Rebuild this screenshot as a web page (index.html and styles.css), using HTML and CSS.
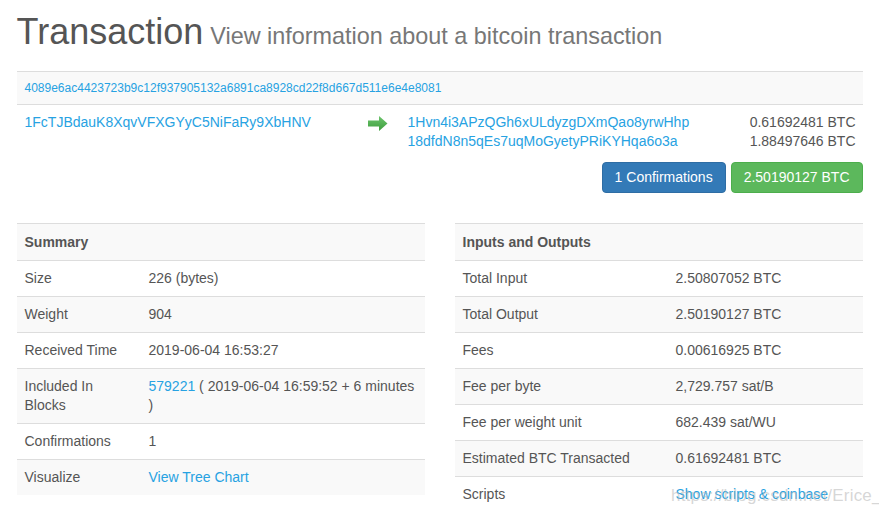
FILE: index.html
```html
<!DOCTYPE html>
<html lang="en">

<head>
    <meta charset="UTF-8">
    <title>Transaction</title>
    <link rel="stylesheet" href="styles.css">
</head>

<body>
    <div class="container">
        <h1>Transaction <small>View information about a bitcoin transaction</small></h1>

        <!-- tx hash + in/out -->
        <div class="tx">
            <div class="tx-hash"><a href="#">4089e6ac4423723b9c12f937905132a6891ca8928cd22f8d667d511e6e4e8081</a></div>
            <div class="tx-body">
                <div class="tx-in"><a href="#">1FcTJBdauK8XqvVFXGYyC5NiFaRy9XbHNV</a></div>
                <div class="tx-arrow">
                    <svg width="20" height="15" viewBox="0 0 20 15">
                        <defs>
                            <linearGradient id="ag" x1="0" y1="0" x2="0" y2="1">
                                <stop offset="0" stop-color="#6cc46c" />
                                <stop offset="1" stop-color="#3e9e3e" />
                            </linearGradient>
                        </defs>
                        <path d="M0 4.5 H11 V0 L19.5 7.5 L11 15 V10.5 H0 Z" fill="url(#ag)" />
                    </svg>
                </div>
                <div class="tx-out">
                    <div class="out-row"><a href="#">1Hvn4i3APzQGh6xULdyzgDXmQao8yrwHhp</a><span>0.61692481 BTC</span></div>
                    <div class="out-row"><a href="#">18dfdN8n5qEs7uqMoGyetyPRiKYHqa6o3a</a><span>1.88497646 BTC</span></div>
                </div>
            </div>
            <div class="tx-buttons">
                <button class="btn btn-primary">1 Confirmations</button>
                <button class="btn btn-success">2.50190127 BTC</button>
            </div>
        </div>

        <div class="tables">
            <table class="info">
                <tr><th colspan="2">Summary</th></tr>
                <tr><td class="label">Size</td><td>226 (bytes)</td></tr>
                <tr><td class="label">Weight</td><td>904</td></tr>
                <tr><td class="label">Received Time</td><td>2019-06-04 16:53:27</td></tr>
                <tr><td class="label">Included In Blocks</td><td><a href="#">579221</a> ( 2019-06-04 16:59:52 + 6 minutes )</td></tr>
                <tr><td class="label">Confirmations</td><td>1</td></tr>
                <tr><td class="label">Visualize</td><td><a href="#">View Tree Chart</a></td></tr>
            </table>

            <table class="info io">
                <tr><th colspan="2">Inputs and Outputs</th></tr>
                <tr><td class="label">Total Input</td><td>2.50807052 BTC</td></tr>
                <tr><td class="label">Total Output</td><td>2.50190127 BTC</td></tr>
                <tr><td class="label">Fees</td><td>0.00616925 BTC</td></tr>
                <tr><td class="label">Fee per byte</td><td>2,729.757 sat/B</td></tr>
                <tr><td class="label">Fee per weight unit</td><td>682.439 sat/WU</td></tr>
                <tr><td class="label">Estimated BTC Transacted</td><td>0.61692481 BTC</td></tr>
                <tr><td class="label">Scripts</td><td><a href="#">Show scripts &amp; coinbase</a></td></tr>
            </table>
        </div>
    </div>

    <div class="watermark">https://blog.csdn.net/Erice_s</div>
</body>

</html>
```

FILE: styles.css
```css
* {
    margin: 0;
    padding: 0;
    box-sizing: border-box;
}

body {
    font-family: "Liberation Sans", Arial, sans-serif;
    font-size: 14px;
    line-height: 19px;
    color: #555;
    background-color: #fff;
}

a {
    color: #27a2e2;
    text-decoration: none;
}

.container {
    width: 846px;
    margin: 0 auto;
}

h1 {
    font-size: 36px;
    font-weight: normal;
    line-height: 40px;
    color: #555;
    padding-top: 12px;
    margin-bottom: 15px;
}

h1 small {
    font-size: 23.4px;
    color: #777;
    margin-left: -3px;
}

/* tx block */
.tx-hash {
    border-top: 1px solid #ddd;
    border-bottom: 1px solid #ddd;
    background-color: #f9f9f9;
    font-size: 12px;
    line-height: 17px;
    padding: 8px 8px 7px;
}

.tx-body {
    display: grid;
    grid-template-columns: 343px 40px 1fr;
}

.tx-in {
    padding: 8px;
}

.tx-arrow {
    padding-top: 11px;
    padding-left: 8px;
}

.tx-out {
    padding: 8px 7px 11px 8px;
}

.out-row {
    display: flex;
    justify-content: space-between;
}

.tx-buttons {
    display: flex;
    justify-content: flex-end;
    gap: 5px;
}

.btn {
    font-family: inherit;
    font-size: 14px;
    line-height: 19px;
    color: #fff;
    padding: 5px 12px;
    border: 1px solid transparent;
    border-radius: 4px;
    height: 31px;
}

.btn-primary {
    background-color: #337ab7;
    border-color: #2e6da4;
}

.btn-success {
    background-color: #5cb85c;
    border-color: #4cae4c;
}

/* tables */
.tables {
    display: grid;
    grid-template-columns: 408px 408px;
    align-items: start;
    gap: 30px;
    margin-top: 30px;
}

.info {
    width: 100%;
    border-collapse: collapse;
}

.info th,
.info td {
    text-align: left;
    vertical-align: top;
    padding: 8px;
    border-top: 1px solid #ddd;
}

.info th {
    font-weight: bold;
    padding-top: 9px;
    padding-bottom: 8px;
}

.info tr:nth-child(odd) {
    background-color: #f9f9f9;
}

.info td.label {
    width: 124px;
}

.info.io td.label {
    width: 213px;
}

.watermark {
    position: absolute;
    left: 671px;
    top: 486px;
    font-size: 17px;
    color: rgba(180, 180, 180, 0.55);
    letter-spacing: 0.2px;
}
```
